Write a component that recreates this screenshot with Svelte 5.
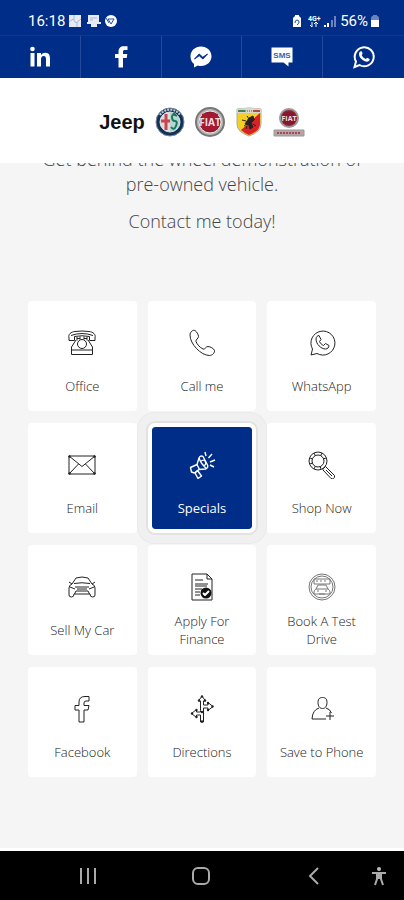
<script>
  const socials = [
    { name: 'LinkedIn', icon: 'linkedin' },
    { name: 'Facebook', icon: 'facebook' },
    { name: 'Messenger', icon: 'messenger' },
    { name: 'SMS', icon: 'sms' },
    { name: 'WhatsApp', icon: 'whatsapp' }
  ];

  let active = $state('Specials');

  // outline icons on a 28x28 grid
  const tiles = [
    {
      label: 'Office',
      paths: [
        'M1 9c-1-4 2-6 6-6.500q7-1 14 0c4 .5 7 2.500 6 6.500v2.500h-5.500v-4q-7.500-1.500-15 0v4H1Z',
        'M3 6.500q11-4 22 0',
        'M9 8v3.500M12 7.500v3M16 7.500v3M19 8v3.500M9 9.500h3M16 9.500h3',
        'M8 11 3.500 18v7.500h21V18L20 11M3.500 21h21',
        'M18.500 15a4.500 4.500 0 1 1-9 0 4.500 4.500 0 1 1 9 0'
      ]
    },
    {
      label: 'Call me',
      paths: [
        'M2 6c0-3 3-5.500 5-4.500 1.500 1 3.500 4 3.500 6S7.500 10.500 8 12.500c1 3 4 6 7 7.500 2 1 2.500-2.500 5-2.500 2 0 6 2 6.500 4 .5 2-2 5-5 5C13 26.500 2 15 2 6Z'
      ]
    },
    {
      label: 'WhatsApp',
      paths: [
        'M3 26l1.500-6A12 12 0 1 1 9 24.500L3 26Z',
        'M8 10c0-2 1.500-3.500 3-3.500l2 4-1.500 2c1 2 2 3 4 4l2-2 3.500 2c0 2-1.500 3.500-3.500 3.500C13 20 8 15 8 10Z'
      ]
    },
    {
      label: 'Email',
      paths: ['M1 5h26v18H1Z', 'M1 5l13 10.500L27 5M1 23l9.500-10M27 23l-9.500-10'],
      dots: [[1.5, 5.5], [26.5, 5.5], [1.5, 22.5], [26.5, 22.5]]
    },
    {
      label: 'Specials',
      paths: [
        'M2.500 16.500 9 13.500 11 7q1.500-3 4-1.500l4.500 8.500q1 3-2 4L11 18.500l-4.500 3.500-3-1Z',
        'M9 13.500l2.500 5M7 22l2.500-2.500 4 5.500-3.500 2.500-3-5.500',
        'M11 7q2 6 7.500 10.500M12.500 10.500q4-3 5 .5t-2.500 3.500',
        'M18 5l-1-4M20.500 7 24 3M22 11l5-2M22 14l4 2'
      ]
    },
    {
      label: 'Shop Now',
      paths: [
        'M19 10a9 9 0 1 1-18 0 9 9 0 1 1 18 0',
        'M16 10a6 6 0 1 1-12 0 6 6 0 1 1 12 0',
        'M2 7l2.500 1M6 2l1.500 3M14 2l-1.500 3M18 7l-3 1M2 13l3-1M6 18l1.500-3M13 18l-1-3',
        'M15.500 17.500l2-2 9 9q.5 2-1 3t-2.500 0l-8-8.500q-.5-1 .5-1.500M18 19l6 6'
      ]
    },
    {
      label: 'Sell My Car',
      paths: [
        'M4 11 8 5q6-2 12 0l4 6M6 10.500q8-1.500 16 0M1 9l3 2M27 9l-3 2',
        'M4 11q-3 1-3 4v7q0 2 2.500 2T6 21h16q0 3 2.500 3t2.500-2v-7q0-3-3-4',
        'M2 14l5 2M26 14l-5 2M7 14h14M8 18h12l1.500 3M6.500 21 8 18M9 16h10'
      ]
    },
    {
      label: 'Apply For Finance',
      paths: ['M4 1h15l5 5v21H4Z', 'M19 1v5h5', 'M7 7h8M7 11h13M7 13h12M7 16h7M7 19h5M7 22h5'],
      check: true
    },
    {
      label: 'Book A Test Drive',
      fine: true,
      paths: [
        'M27 14a13 13 0 1 1-26 0 13 13 0 1 1 26 0',
        'M25 14a11 11 0 1 1-22 0 11 11 0 1 1 22 0',
        'M6 6h16v5H6ZM8 8h2M12 8h2M16 8h2',
        'M8 16l2-4h8l2 4q2 1 2 3v2H6v-2q0-2 2-3M8 16h12M9 18h2M17 18h2M11 21h6'
      ]
    },
    {
      label: 'Facebook',
      paths: [
        'M11 27V15H7v-4.500h4V7q0-5.500 6-5.500h4V6h-3q-2 0-2 2v2.500h5L20 15h-4v12Z'
      ]
    },
    {
      label: 'Directions',
      paths: [
        'M12.500 15.500V6H10.500L14 1l3.500 5h-2v4H20V7.500l5 4-5 4V13h-4.500v14h-3v-7H8.500v2.500l-5-4 5-4V17h4Z'
      ],
      dots: [[14, 1.5], [11, 5.5], [17, 5.5], [20, 8], [24.5, 11.5], [20, 15], [8.5, 15], [4, 18.5], [8.5, 22], [14, 17], [14, 26.5]]
    },
    {
      label: 'Save to Phone',
      paths: [
        'M19 7.500c0 4-2 6-4.500 6S10 11.500 10 7.500s2-5 4.500-5 4.500 1 4.500 5Z',
        'M11 13q-6.500 2-7 11h14M18 13q4 1 5.500 5M22 17v8M18 21h8'
      ]
    }
  ];
</script>

<div class="screen">
  <header>
    <div class="status">
      <div class="status-group">
        <span>16:18</span>
        <svg width="50" height="14" viewBox="0 0 50 14" fill="#fff" aria-hidden="true">
          <path d="M1 1h12v12H1Z" opacity=".9" />
          <path d="M1 8l4-3 3 4 5-4M6 1v5M9 8v5" fill="none" stroke="#a9b7d8" />
          <path d="M20 1h11v7h2v2h-4v3h-6v-3h-4V8h1Z" opacity=".9" />
          <path d="M22 4h7M22 6h3" stroke="#a9b7d8" />
          <circle cx="43" cy="7" r="6" />
          <path d="M40 5h6l-3 5ZM38 4l3 5" fill="none" stroke="#274d9c" />
        </svg>
      </div>
      <div class="status-group right">
        <svg width="46" height="14" viewBox="0 0 46 14" aria-hidden="true">
          <path d="M1 4 3 2V1h4v1l2 2v9H1Z" fill="#fff" />
          <path d="M3 9q0-3 2-3t2 2-2 3" fill="none" stroke="#274d9c" />
          <text x="16" y="7" class="net">4G+</text>
          <path d="M20 8v5M18 11l2 2M24 13V8M22 10l2-2 2 2" fill="none" stroke="#fff" />
          <path d="M33 13v-2M36 13V9" stroke="#fff" stroke-width="2" />
          <path d="M40 13V6M43 13V2" stroke="#6c84bd" stroke-width="2" />
        </svg>
        <span>56%</span>
        <svg width="10" height="14" viewBox="0 0 10 14" aria-hidden="true">
          <path d="M1 4q0-2 2-2V1h4v1q2 0 2 2v3H1Z" fill="#6c84bd" />
          <path d="M1 6h8v7H1Z" fill="#fff" />
        </svg>
      </div>
    </div>

    <nav class="socials" aria-label="Social links">
      {#each socials as social}
        <a href="#{social.icon}" aria-label={social.name}>
          <svg width="24" height="24" viewBox="0 0 24 24" fill="#fff" aria-hidden="true">
            {#if social.icon === 'linkedin'}
              <circle cx="4.500" cy="4" r="2.300" />
              <path d="M2.500 8h4v13.500h-4ZM9 8h4v2q1.500-2.300 4.300-2.300c4 0 4.700 2.800 4.700 6v7.800h-4v-7c0-1.700-.3-3.500-2.300-3.500S13 12.600 13 14.500v7H9Z" />
            {:else if social.icon === 'facebook'}
              <path d="M9.500 22.500V13H6V9h3.500V7c0-4 2-5.800 5.200-5.800h3.800V5h-2.300C14.500 5 14 5.600 14 7v2h4.300l-.6 4H14v9.500Z" />
            {:else if social.icon === 'messenger'}
              <path d="M12 1.500c6 0 10.500 4.300 10.500 9.800S18 21 12 21q-1.700 0-3.200-.5L5 22.500V19c-2.300-1.800-3.500-4.500-3.500-7.700C1.500 5.800 6 1.500 12 1.500Z" />
              <path d="M5.500 14l4.700-5 3.600 3.300L18.500 9l-4.600 5-3.700-3.300Z" fill="#002d87" stroke="#002d87" />
            {:else if social.icon === 'sms'}
              <path d="M1.500 2.500h21v15h-4v4l-5-4h-12Z" />
              <text x="12" y="13" class="sms">SMS</text>
            {:else}
              <path d="M2.500 22l1.500-5.500A9.500 9.500 0 1 1 7.500 20Z" fill="none" stroke="#fff" stroke-width="2" />
              <path d="M7 9c0-1.500 1-2.700 2-2.700.7 0 1 .3 1.500 2 .3 1-1 1.600-.8 2 1 2 2.300 3 4 3.700.5.200 1-1.400 1.500-1.300l2.300 1.200c.3.200 0 1.500-.6 2.100-2.500 2.500-9.900-2-9.900-7Z" />
            {/if}
          </svg>
        </a>
      {/each}
    </nav>
  </header>

  <div class="brands">
    <strong class="jeep">Jeep</strong>
    <svg width="30" height="30" viewBox="0 0 30 30" role="img" aria-label="Alfa Romeo">
      <circle cx="15" cy="15" r="14" fill="#123158" stroke="#7b8a99" />
      <path d="M5 8a12 12 0 0 1 20 0" fill="none" stroke="#c6ced5" stroke-width="2" stroke-dasharray="2 1" />
      <circle cx="15" cy="15" r="10" fill="#b9d5d2" stroke="#dce2e5" />
      <path d="M15 5a10 10 0 0 0 0 20Z" fill="#dfdcdb" />
      <path d="M11 7v16M6 14h9" stroke="#c94550" stroke-width="3" />
      <path d="M22 9q-5-3-5 1t3 4 1 5-5 1M18 6l3 2" fill="none" stroke="#147a5b" stroke-width="2" />
    </svg>
    <svg width="30" height="30" viewBox="0 0 30 30" role="img" aria-label="Fiat">
      <circle cx="15" cy="15" r="14" fill="#b8b8b8" stroke="#777" stroke-width="2" />
      <circle cx="15" cy="15" r="11" fill="#821b2c" stroke="#eee" />
      <path d="M7 7q8-3 16 0v15q-8 4-16 0Z" fill="#a71930" />
      <text x="15" y="19" class="fiat">FIAT</text>
    </svg>
    <svg width="28" height="30" viewBox="0 0 28 30" role="img" aria-label="Abarth">
      <path d="M2 2q12-2 24 0v15q0 8-12 12Q2 25 2 17Z" fill="#f5cf24" stroke="#aaa" />
      <path d="M25 6v11q0 7-11 11-5-2-8-5Z" fill="#d82228" />
      <path d="M2 2q12-2 24 0v4H2Z" fill="#d8d8d0" />
      <path d="M3 4h7" stroke="#438354" stroke-width="2" />
      <path d="M18 4h7" stroke="#b64a42" stroke-width="2" />
      <path d="M10 4h8" stroke="#555" stroke-dasharray="1 1" />
      <path d="M14 11l4-2 1 4-3 3 2 4-3 2-1-4-4-1ZM7 13l4 1M9 19l3-2M18 17l3 2M11 22l1-3M12 9l2 3M20 12l-2 2" fill="#252321" stroke="#252321" />
    </svg>
    <svg width="32" height="30" viewBox="0 0 32 30" role="img" aria-label="Fiat Professional">
      <circle cx="16" cy="11" r="9" fill="#982036" stroke="#999" stroke-width="2" />
      <path d="M10 6q6-2 12 0v10q-6 3-12 0Z" fill="#83192c" />
      <text x="16" y="14" class="fiat small">FIAT</text>
      <path d="M1 23h30v6H1Z" fill="#b7a4a8" stroke="#999" />
      <path d="M4 26h24" stroke="#a84855" stroke-width="2" stroke-dasharray="2 1" />
    </svg>
  </div>

  <main>
    <div class="intro">
      <p>Get behind the wheel demonstration of<br />pre-owned vehicle.</p>
      <p>Contact me today!</p>
    </div>

    <div class="grid">
      {#each tiles as tile}
        <button
          type="button"
          class="tile"
          class:active={active === tile.label}
          onclick={() => (active = tile.label)}
        >
          <svg class:fine={tile.fine} width="28" height="28" viewBox="0 0 28 28" aria-hidden="true">
            {#each tile.paths as d}
              <path {d} />
            {/each}
            {#each tile.dots ?? [] as [cx, cy]}
              <circle {cx} {cy} r="1.200" fill="currentColor" stroke="none" />
            {/each}
            {#if tile.check}
              <circle cx="18" cy="20" r="5.500" fill="#111" stroke="none" />
              <path d="M15 20l2 2 4-4" stroke="#fff" stroke-width="2" />
            {/if}
          </svg>
          <span class="label">{tile.label}</span>
        </button>
      {/each}
    </div>
  </main>

  <footer>
    <div class="keys">
      <button type="button" aria-label="Recent apps">
        <svg width="24" height="24" viewBox="0 0 24 24"><path d="M5 4v16M12 4v16M19 4v16" /></svg>
      </button>
      <button type="button" aria-label="Home">
        <svg width="24" height="24" viewBox="0 0 24 24"><rect x="4" y="4" width="16" height="16" rx="5" /></svg>
      </button>
      <button type="button" aria-label="Back">
        <svg width="24" height="24" viewBox="0 0 24 24"><path d="M16 4l-8 8 8 8" /></svg>
      </button>
    </div>
    <button type="button" aria-label="Accessibility">
      <svg width="24" height="24" viewBox="0 0 24 24">
        <circle cx="12" cy="5" r="2" fill="#bbb" stroke="none" />
        <path d="M5 9h14M8 21l2-6V9h4v6l2 6M12 9v6" />
      </svg>
    </button>
  </footer>
</div>

<style>
  :global(body) {
    margin: 0;
    background: #f5f5f5;
    font-family: 'Open Sans', 'Noto Sans', sans-serif;
  }

  .screen {
    display: flex;
    flex-direction: column;
    min-height: 100vh;
  }

  header {
    background: #002d87;
    color: #fff;
  }

  .status {
    display: flex;
    justify-content: space-between;
    align-items: center;
    height: 35px;
    padding: 6px 24px 0 28px;
    box-sizing: border-box;
    font: 15px/20px Roboto, sans-serif;
  }

  .status-group {
    display: flex;
    align-items: center;
    gap: 3px;
  }

  .status-group.right {
    gap: 2px;
  }

  .net {
    fill: #fff;
    font: 700 7px Roboto, sans-serif;
  }

  .socials {
    display: grid;
    grid-template-columns: repeat(5, 1fr);
    height: 43px;
  }

  .socials a {
    display: flex;
    align-items: center;
    justify-content: center;
    border-top: 1px solid #0d388e;
    border-right: 1px solid #23499a;
  }

  .socials a:last-child {
    border-right: none;
  }

  .sms {
    fill: #40609f;
    font: 700 8px 'Liberation Sans', sans-serif;
    text-anchor: middle;
  }

  .brands {
    display: flex;
    align-items: center;
    justify-content: center;
    gap: 10px;
    height: 83px;
    padding-top: 2px;
    background: #fff;
  }

  .jeep {
    color: #111;
    font: 700 20px/24px 'Liberation Sans', sans-serif;
  }

  .fiat {
    fill: #f3dfe2;
    font: 700 10px 'Open Sans', sans-serif;
    text-anchor: middle;
  }

  .fiat.small {
    font-size: 7px;
  }

  main {
    flex: 1;
    overflow: hidden;
    padding-bottom: 69px;
    border-bottom: 3px solid #fff;
  }

  /* the page is scrolled, so the first line sits half under the brand bar */
  .intro {
    margin-top: -16px;
    margin-bottom: 67px;
    color: #444;
    font-size: 18px;
    font-weight: 300;
    line-height: 25px;
    text-align: center;
  }

  .intro p {
    margin: 0 0 12px;
  }

  .grid {
    display: grid;
    grid-template-columns: repeat(3, 1fr);
    gap: 12px 11px;
    padding: 0 28px;
  }

  .tile {
    display: flex;
    flex-direction: column;
    align-items: center;
    min-height: 110px;
    padding: 28px 8px 6px;
    border: none;
    border-radius: 4px;
    background: #fff;
    color: #222;
    font: 300 13px/18px 'Open Sans', 'Noto Sans', sans-serif;
    cursor: pointer;
  }

  .tile svg {
    flex: none;
    fill: none;
    stroke: currentColor;
    stroke-width: 1;
    stroke-linejoin: round;
  }

  .tile svg.fine {
    stroke: #777;
  }

  .label {
    display: flex;
    align-items: center;
    min-height: 36px;
    margin-top: 11px;
  }

  .tile.active {
    position: relative;
    padding: 24px 4px 2px;
    border: 4px solid #fff;
    border-radius: 7px;
    background: #002d87;
    background-clip: padding-box;
    box-shadow: 0 0 0 2px #e2e2e2, 0 0 0 10px #f0f0f0, 0 0 0 11px #eaeaea;
    color: #fff;
    font-weight: 400;
  }

  .tile.active svg {
    stroke-width: 1.4;
  }

  footer {
    display: flex;
    align-items: center;
    gap: 41px;
    height: 49px;
    padding: 0 13px 0 76px;
    background: #000;
  }

  .keys {
    display: flex;
    flex: 1;
    justify-content: space-between;
  }

  footer button {
    display: flex;
    padding: 0;
    border: none;
    background: none;
  }

  footer svg {
    fill: none;
    stroke: #aaa;
    stroke-width: 2;
  }
</style>
